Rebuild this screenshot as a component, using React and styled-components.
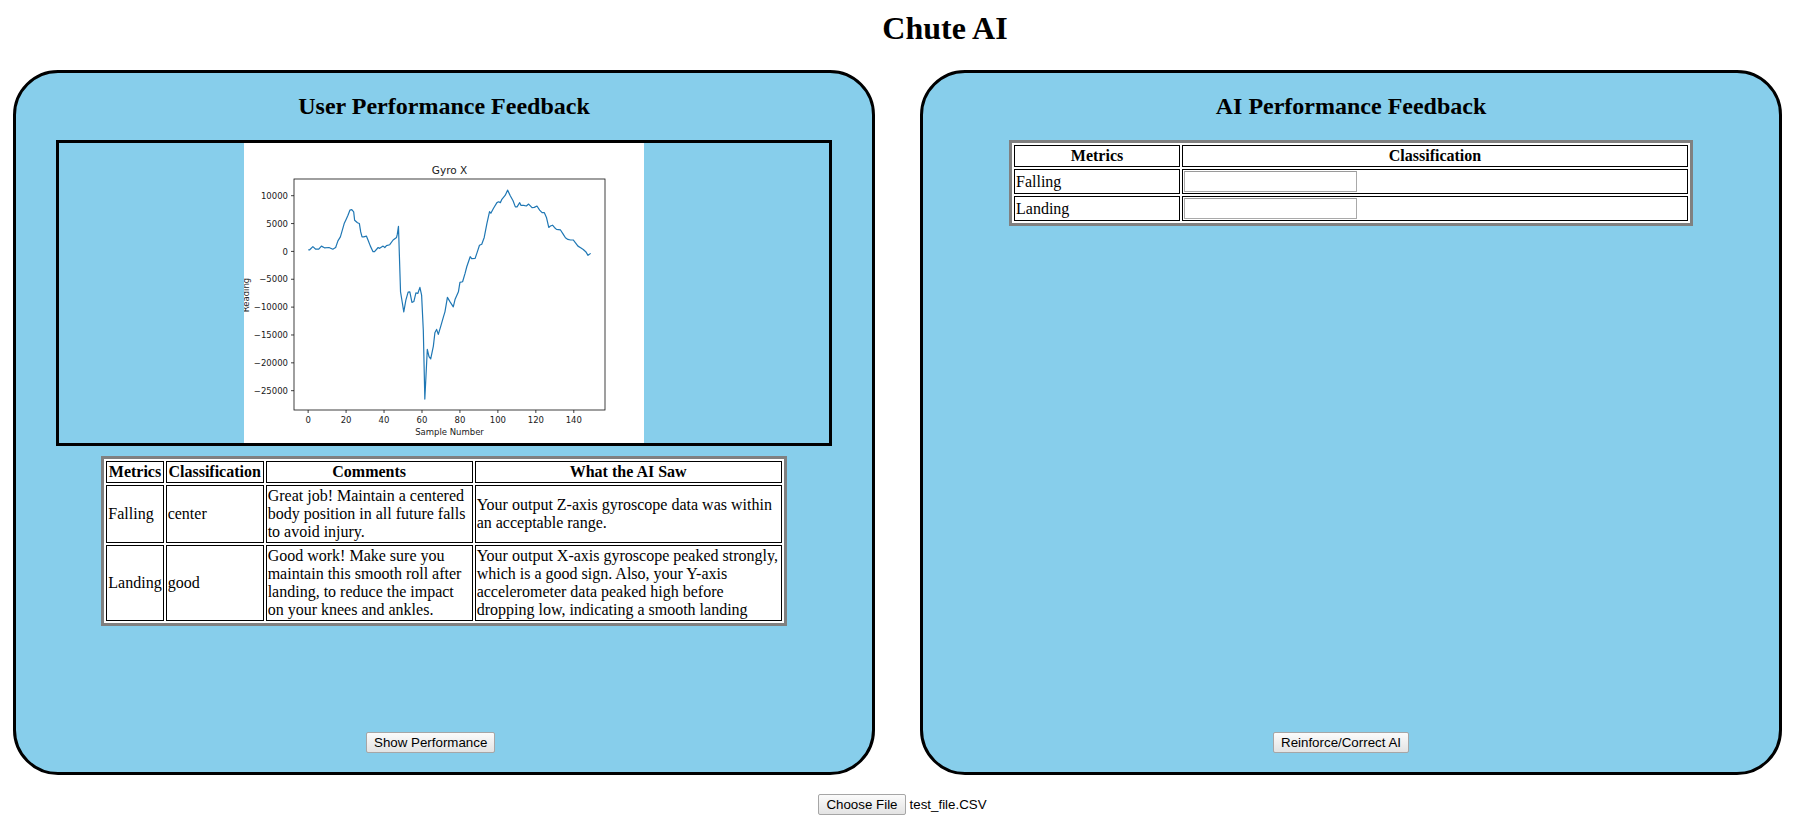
import React from 'react';
import styled, { createGlobalStyle } from 'styled-components';

const GlobalStyle = createGlobalStyle`
  html, body { margin: 0; padding: 0; background: #fff; }
  body {
    font-family: "Liberation Serif", "Times New Roman", serif;
    color: #000;
  }
`;

const Page = styled.div`
  display: flex;
  flex-direction: column;
  width: 1805px;
`;

const Title = styled.h1`
  margin: 10px 0 23px;
  padding-left: 85px;
  font-size: 32px;
  line-height: 37px;
  font-weight: bold;
  text-align: center;
`;

const PanelRow = styled.div`
  display: flex;
  gap: 45px;
  padding-left: 13px;
`;

const Panel = styled.section`
  box-sizing: border-box;
  width: 862px;
  height: 705px;
  border: 3px solid #000;
  border-radius: 45px;
  background: #87ceeb;
  display: flex;
  flex-direction: column;
  align-items: center;
`;

const PanelTitle = styled.h2`
  margin: 20px 0;
  font-size: 24px;
  line-height: 27px;
  font-weight: bold;
`;

const ChartFrame = styled.div`
  box-sizing: border-box;
  align-self: stretch;
  margin: 0 40px;
  height: 306px;
  border: 3px solid #000;
  display: flex;
  justify-content: center;
`;

const DataTable = styled.table`
  border: 3px solid #808080;
  border-spacing: 2px;
  background: #fff;
  margin-top: ${(p) => p.$mt || 0}px;
  font-size: 16px;
`;

const HeadCell = styled.th`
  border: 1px solid #000;
  padding: 1px;
  width: ${(p) => p.$w}px;
  line-height: 18px;
  font-weight: bold;
  text-align: center;
`;

const Cell = styled.td`
  border: 1px solid #000;
  padding: 1px;
  line-height: 18px;
  text-align: left;
  vertical-align: middle;
`;

const TextInput = styled.input`
  display: block;
  box-sizing: border-box;
  width: 173px;
  height: 21px;
  margin: 0;
  padding: 1px 2px;
  border: 1px solid #a9a9a9;
  border-top-color: #9a9a9a;
  background: #fff;
  font-family: "Liberation Sans", Arial, sans-serif;
  font-size: 13.333px;
`;

const PanelFooter = styled.div`
  align-self: stretch;
  margin-top: auto;
  margin-bottom: 19px;
  padding-left: 350px;
  display: flex;
`;

const Button = styled.button`
  box-sizing: border-box;
  height: 21px;
  padding: 0 7px;
  border: 1px solid #a6a6a6;
  border-radius: 2px;
  background: linear-gradient(#fbfbfb, #e3e3e3);
  color: #000;
  font-family: "Liberation Sans", Arial, sans-serif;
  font-size: 13.333px;
  line-height: 19px;
  cursor: pointer;
`;

const FileRow = styled.div`
  display: flex;
  justify-content: center;
  align-items: center;
  gap: 4px;
  margin-top: 19px;
`;

const FileName = styled.span`
  font-family: "Liberation Sans", Arial, sans-serif;
  font-size: 13.333px;
`;

const ChartText = styled.text`
  font-family: "DejaVu Sans", sans-serif;
  font-size: ${(p) => p.$size || 8.5}px;
  fill: #1a1a1a;
`;

const DATA = [
  [0, 300], [0.7, 250], [2.5, 850], [4, 400], [5.6, 400], [7, 950], [8.6, 650], [11, 700], [13, 400],
  [14.5, 700], [15.7, 1900], [17, 2600], [19, 5000], [20, 5750], [21, 6500], [22, 7400], [23, 7500],
  [24, 7100], [24.5, 5600], [26, 5150], [27, 5000], [27.7, 3500], [28.4, 2600], [29.3, 2600],
  [30.7, 2750], [31.6, 2000], [32.8, 950], [34.2, -50], [35, -50], [36.9, 700], [37.7, 550],
  [39.5, 950], [40.4, 700], [41.3, 1050], [43, 1200], [44.8, 2050], [46.6, 2500], [47, 3100],
  [47.6, 4500], [48.7, -7250], [49.7, -9350], [50.4, -10850], [51.5, -8750], [52.7, -7300],
  [53.6, -7250], [54.7, -9150], [55.7, -9000], [56.8, -7450], [57.8, -7550], [58.9, -6450],
  [59.8, -7850], [60.7, -14150], [61.5, -26500], [62.8, -17600], [63.7, -18900], [64.6, -19300],
  [66, -17000], [66.8, -14600], [67.7, -14000], [68.6, -14900], [69.8, -13550], [71.3, -11750],
  [72.1, -10850], [73.4, -8250], [74.8, -9050], [76.5, -9950], [77.4, -8650], [79.2, -7250],
  [80, -5550], [81.4, -5450], [82.7, -3950], [83.6, -2750], [85.4, -950], [86.2, -1300],
  [88, -1250], [88.9, -350], [90.3, 1100], [91.5, 1300], [92.8, 2500], [94.2, 5000], [95.6, 7150],
  [96.3, 6850], [97.7, 7750], [99.5, 8750], [100.4, 8900], [101.3, 8750], [102.1, 9350],
  [103.9, 10100], [105.1, 11000], [106.6, 9950], [108, 9100], [109.2, 8000], [110.1, 8000],
  [111.5, 8750], [112.2, 8250], [113.6, 8250], [115, 8150], [116.2, 8500], [118, 7850],
  [119.2, 7900], [120.6, 8150], [122, 7400], [123.3, 6950], [124.5, 6950], [125.6, 6100],
  [126.8, 4300], [127.7, 4550], [128.8, 4700], [129.8, 4300], [130.9, 3950], [133, 3850],
  [134.4, 3100], [135.6, 2450], [136.9, 2150], [138.3, 2050], [139.7, 2050], [140.9, 1550],
  [142.2, 950], [143.6, 650], [145, 350], [146.3, -50], [147.5, -700], [148.9, -350],
];

const AX = { left: 50, right: 361, top: 36, bottom: 267 };
const sx = (i) => AX.left + ((i + 7.45) / 163.9) * (AX.right - AX.left);
const sy = (v) => 52.7 + (10000 - v) * 0.005571;

const fmt = (v) => (v < 0 ? '\u2212' + Math.abs(v) : String(v));

function GyroChart() {
  const points = DATA.map(([i, v]) => `${sx(i).toFixed(2)},${sy(v).toFixed(2)}`).join(' ');
  const xTicks = [0, 20, 40, 60, 80, 100, 120, 140];
  const yTicks = [10000, 5000, 0, -5000, -10000, -15000, -20000, -25000];
  return (
    <svg width="400" height="300" viewBox="0 0 400 300" style={{ display: 'block', background: '#fff' }}>
      <ChartText x="205.5" y="31" $size={10.5} textAnchor="middle">Gyro X</ChartText>
      <rect x={AX.left} y={AX.top} width={AX.right - AX.left} height={AX.bottom - AX.top} fill="none" stroke="#111" strokeWidth="0.8" />
      {xTicks.map((t) => (
        <g key={t}>
          <line x1={sx(t)} x2={sx(t)} y1={AX.bottom} y2={AX.bottom + 3} stroke="#111" strokeWidth="0.8" />
          <ChartText x={sx(t)} y="280" textAnchor="middle">{t}</ChartText>
        </g>
      ))}
      {yTicks.map((t) => (
        <g key={t}>
          <line x1={AX.left - 3} x2={AX.left} y1={sy(t)} y2={sy(t)} stroke="#111" strokeWidth="0.8" />
          <ChartText x="44" y={sy(t) + 3.1} textAnchor="end">{fmt(t)}</ChartText>
        </g>
      ))}
      <polyline points={points} fill="none" stroke="#1f77b4" strokeWidth="1.2" strokeLinejoin="round" />
      <ChartText x="205.5" y="292" textAnchor="middle">Sample Number</ChartText>
      <ChartText x="5" y="152" textAnchor="middle" transform="rotate(-90 5 152)">Reading</ChartText>
    </svg>
  );
}

export default function App() {
  return (
    <Page>
      <GlobalStyle />
      <Title>Chute AI</Title>
      <PanelRow>
        <Panel>
          <PanelTitle>User Performance Feedback</PanelTitle>
          <ChartFrame>
            <GyroChart />
          </ChartFrame>
          <DataTable $mt={10}>
            <thead>
              <tr>
                <HeadCell $w={53}>Metrics</HeadCell>
                <HeadCell $w={94}>Classification</HeadCell>
                <HeadCell $w={203}>Comments</HeadCell>
                <HeadCell $w={303}>What the AI Saw</HeadCell>
              </tr>
            </thead>
            <tbody>
              <tr>
                <Cell>Falling</Cell>
                <Cell>center</Cell>
                <Cell>Great job! Maintain a centered body position in all future falls to avoid injury.</Cell>
                <Cell>Your output Z-axis gyroscope data was within an acceptable range.</Cell>
              </tr>
              <tr>
                <Cell>Landing</Cell>
                <Cell>good</Cell>
                <Cell>Good work! Make sure you maintain this smooth roll after landing, to reduce the impact on your knees and ankles.</Cell>
                <Cell>Your output X-axis gyroscope peaked strongly, which is a good sign. Also, your Y-axis accelerometer data peaked high before dropping low, indicating a smooth landing</Cell>
              </tr>
            </tbody>
          </DataTable>
          <PanelFooter>
            <Button type="button">Show Performance</Button>
          </PanelFooter>
        </Panel>
        <Panel>
          <PanelTitle>AI Performance Feedback</PanelTitle>
          <DataTable>
            <thead>
              <tr>
                <HeadCell $w={162}>Metrics</HeadCell>
                <HeadCell $w={502}>Classification</HeadCell>
              </tr>
            </thead>
            <tbody>
              <tr>
                <Cell>Falling</Cell>
                <Cell><TextInput type="text" /></Cell>
              </tr>
              <tr>
                <Cell>Landing</Cell>
                <Cell><TextInput type="text" /></Cell>
              </tr>
            </tbody>
          </DataTable>
          <PanelFooter>
            <Button type="button">Reinforce/Correct AI</Button>
          </PanelFooter>
        </Panel>
      </PanelRow>
      <FileRow>
        <Button type="button">Choose File</Button>
        <FileName>test_file.CSV</FileName>
      </FileRow>
    </Page>
  );
}
